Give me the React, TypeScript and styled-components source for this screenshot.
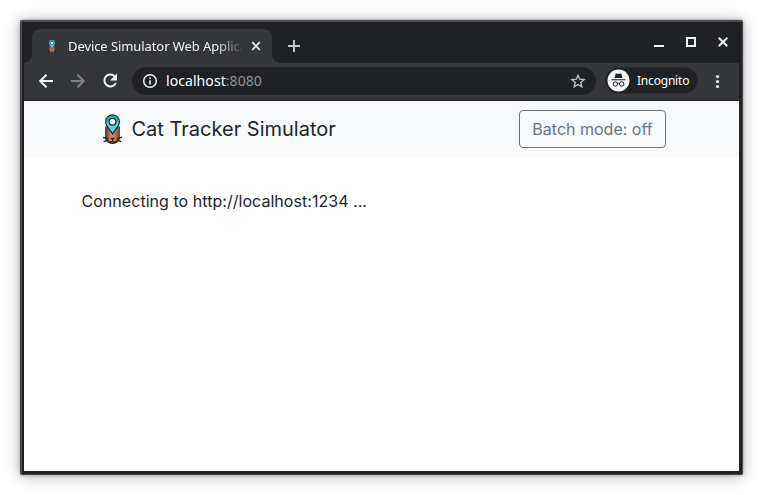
import React from "react";
import styled, { createGlobalStyle } from "styled-components";

const GlobalStyle = createGlobalStyle`
  *, *::before, *::after { box-sizing: border-box; }
  body { margin: 0; background: #fff; overflow: hidden; }
  svg { display: block; flex: none; }
`;

const Desktop = styled.div`
  width: 763px;
  height: 495px;
  padding: 20px;
`;

const Window = styled.div`
  display: flex;
  flex-direction: column;
  width: 723px;
  height: 455px;
  padding: 0 3px 3px 2px;
  border: solid #494c4f;
  border-width: 2px 1px 1px 2px;
  border-radius: 2px;
  background: #202124;
  box-shadow: 0 0 3px rgba(0, 0, 0, 0.4), 0 1px 15px rgba(0, 0, 0, 0.3);
`;

const TabStrip = styled.div`
  display: flex;
  align-items: flex-end;
  height: 41px;
  padding-left: 8px;
`;

const Tab = styled.div`
  position: relative;
  display: flex;
  align-items: center;
  width: 240px;
  height: 34px;
  padding: 0 10px 0 12px;
  border-radius: 8px 8px 0 0;
  background: #35363a;
  &::before,
  &::after {
    content: "";
    position: absolute;
    bottom: 0;
    width: 8px;
    height: 8px;
  }
  &::before {
    left: -8px;
    background: radial-gradient(circle at 0 0, transparent 7.5px, #35363a 8px);
  }
  &::after {
    right: -8px;
    background: radial-gradient(circle at 100% 0, transparent 7.5px, #35363a 8px);
  }
`;

const TabTitle = styled.div`
  flex: 1;
  margin: 0 6px 0 8px;
  overflow: hidden;
  white-space: nowrap;
  color: #f1f3f4;
  font: 13px/18px "Noto Sans", sans-serif;
  letter-spacing: -0.08px;
  mask-image: linear-gradient(to right, #000 calc(100% - 28px), transparent);
`;

const NewTab = styled.div`
  padding: 0 0 10px 15px;
`;

const WindowControls = styled.div`
  display: flex;
  gap: 20px;
  margin: 0 10px 15px auto;
`;

const Toolbar = styled.div`
  display: flex;
  align-items: center;
  height: 38px;
  padding: 0 12px 2px 12px;
  border-bottom: 1px solid #26242a;
  background: #35363a;
`;

const NavButtons = styled.div`
  display: flex;
  gap: 12px;
  margin-right: 12px;
`;

const AddressBar = styled.div`
  display: flex;
  align-items: center;
  width: 464px;
  height: 28px;
  padding: 0 10px;
  border-radius: 14px;
  background: #202124;
`;

const Url = styled.div`
  flex: 1;
  padding-left: 8px;
  color: #fff;
  font: 14px/20px "Noto Sans", sans-serif;
  letter-spacing: 0.07px;
`;

const Port = styled.span`
  color: #8f9296;
`;

const IncognitoChip = styled.div`
  display: flex;
  align-items: center;
  gap: 7px;
  width: 93px;
  height: 27px;
  margin: 0 11px 0 9px;
  padding-left: 1px;
  border: 1px solid #2b2c2f;
  border-radius: 14px;
  background: #202124;
  color: #fff;
  font: 12px/18px "Noto Sans", sans-serif;
  letter-spacing: -0.2px;
`;

const Page = styled.main`
  flex: 1;
  background: #fff;
  color: #212529;
  font: 16px/24px Inter, sans-serif;
`;

const Navbar = styled.header`
  display: flex;
  align-items: center;
  justify-content: space-between;
  height: 56px;
  padding: 0 73px;
  background: #f8f9fa;
`;

const Brand = styled.div`
  display: flex;
  align-items: center;
  gap: 3.500px;
  font-size: 20px;
  line-height: 30px;
`;

const ModeButton = styled.button`
  width: 147px;
  height: 38px;
  padding: 0;
  border: 1px solid #6c757d;
  border-radius: 4px;
  background: transparent;
  color: #6c757d;
  font: inherit;
`;

const Status = styled.p`
  margin: 0;
  padding: 32px 57.500px;
  letter-spacing: 0.04px;
`;

const CatLogo = ({ width, height }: { width: number; height: number }) => (
  <svg width={width} height={height} viewBox="0 0 22 32">
    <defs>
      <linearGradient id="fur">
        <stop offset="0" stopColor="#6b3c26" />
        <stop offset="0.45" stopColor="#d8956b" />
        <stop offset="1" stopColor="#8a4a2a" />
      </linearGradient>
    </defs>
    <path
      d="M4.200 13.500L7 15.500h8l2.800-2V26c0 2.600-4 4.400-6.800 4.400S4.200 28.600 4.200 26z"
      fill="url(#fur)"
      stroke="#38251c"
      strokeWidth="0.900"
    />
    <path d="M6.500 28.500c2.500 2.200 6.500 2.200 9 0" fill="none" stroke="#171717" strokeWidth="1.200" />
    <path
      d="M1.500 24.300l5 1.200M2.200 28.600l4.600-1.600M20.500 24.300l-5 1.200M19.800 28.600l-4.600-1.600"
      stroke="#171717"
      strokeWidth="1.200"
    />
    <path
      d="M9.500 25.200h3L11 26.900zM11 26.500v1.700m-2.300.1c1 .8 1.900.7 2.300-.1.400.8 1.300.9 2.300.1"
      fill="#171717"
      stroke="#171717"
      strokeWidth="0.800"
    />
    <path
      d="M11 20.900C9.300 17.500 4.100 13.200 4.100 8.700a6.900 6.900 0 0 1 13.800 0C17.900 13.200 12.700 17.500 11 20.900z"
      fill="#69cde0"
      stroke="#102a34"
      strokeWidth="1.200"
    />
    <path d="M5.600 9a5.400 5.400 0 0 1 10.800 0" fill="none" stroke="#16a5c5" strokeWidth="1.800" />
    <circle cx="11" cy="8.700" r="3.400" fill="#fff" stroke="#102a34" strokeWidth="1.300" />
  </svg>
);

const BackIcon = () => (
  <svg width="20" height="20" fill="none" stroke="#f1f3f4" strokeWidth="2">
    <path d="M17 10H4.500M10.500 3.800L4.200 10l6.300 6.200" />
  </svg>
);

const ForwardIcon = () => (
  <svg width="20" height="20" fill="none" stroke="#808185" strokeWidth="2">
    <path d="M3 10h12.500M9.500 3.800l6.300 6.200-6.300 6.200" />
  </svg>
);

const ReloadIcon = () => (
  <svg width="20" height="20">
    <path d="M15 5.600A6 6 0 1 0 15.800 12" fill="none" stroke="#f1f3f4" strokeWidth="2" />
    <path d="M17 2.500v7h-7z" fill="#f1f3f4" />
  </svg>
);

const InfoIcon = () => (
  <svg width="16" height="16">
    <circle cx="8" cy="8" r="6.300" fill="none" stroke="#f1f3f4" strokeWidth="1.500" />
    <path d="M7.200 4.500h1.600v1.600H7.200zM7.200 7.300h1.600v4.200H7.200z" fill="#f1f3f4" />
  </svg>
);

const StarIcon = () => (
  <svg width="16" height="16" fill="none" stroke="#bdc1c6" strokeWidth="1.400">
    <path d="M8 2.200l1.700 4 4.400.4-3.300 2.900 1 4.300L8 11.500l-3.800 2.300 1-4.300-3.300-2.900 4.400-.4z" />
  </svg>
);

const IncognitoIcon = () => (
  <svg width="23" height="23">
    <circle cx="11.500" cy="11.500" r="11" fill="#f1f3f4" />
    <path d="M7.500 9l1.200-4.500h1.100l1.700.5 1.700-.5h1.100L15.500 9zM4.500 10.200h14v1h-14z" fill="#202124" />
    <g fill="none" stroke="#202124" strokeWidth="1">
      <circle cx="8.300" cy="15" r="2.200" />
      <circle cx="14.700" cy="15" r="2.200" />
      <path d="M10.500 14.800q1-.8 2 0" />
    </g>
  </svg>
);

const MenuIcon = () => (
  <svg width="18" height="18" fill="#f1f3f4">
    <circle cx="8.500" cy="4.500" r="1.600" />
    <circle cx="8.500" cy="9.500" r="1.600" />
    <circle cx="8.500" cy="14.500" r="1.600" />
  </svg>
);

export default function App() {
  return (
    <>
      <GlobalStyle />
      <Desktop>
        <Window>
          <TabStrip>
            <Tab>
              <CatLogo width={16} height={15} />
              <TabTitle>Device Simulator Web Application</TabTitle>
              <svg width="12" height="12" stroke="#f1f3f4" strokeWidth="1.800">
                <path d="M2.200 2.200l7.600 7.600M9.800 2.200L2.200 9.800" />
              </svg>
            </Tab>
            <NewTab>
              <svg width="14" height="14" stroke="#c6c8ca" strokeWidth="1.900">
                <path d="M1 7h12M7 1v12" />
              </svg>
            </NewTab>
            <WindowControls>
              <svg width="12" height="12" fill="#f1f3f4">
                <path d="M1 9h10v2H1z" />
              </svg>
              <svg width="12" height="12" fill="none" stroke="#f1f3f4" strokeWidth="2">
                <path d="M2 2h8v8H2z" />
              </svg>
              <svg width="12" height="12" stroke="#f1f3f4" strokeWidth="2">
                <path d="M1.700 1.700l8.600 8.600M10.300 1.700l-8.600 8.600" />
              </svg>
            </WindowControls>
          </TabStrip>
          <Toolbar>
            <NavButtons>
              <BackIcon />
              <ForwardIcon />
              <ReloadIcon />
            </NavButtons>
            <AddressBar>
              <InfoIcon />
              <Url>
                localhost<Port>:8080</Port>
              </Url>
              <StarIcon />
            </AddressBar>
            <IncognitoChip>
              <IncognitoIcon />
              Incognito
            </IncognitoChip>
            <MenuIcon />
          </Toolbar>
          <Page>
            <Navbar>
              <Brand>
                <CatLogo width={31} height={32} />
                Cat Tracker Simulator
              </Brand>
              <ModeButton>Batch mode: off</ModeButton>
            </Navbar>
            <Status>Connecting to http://localhost:1234 ...</Status>
          </Page>
        </Window>
      </Desktop>
    </>
  );
}
